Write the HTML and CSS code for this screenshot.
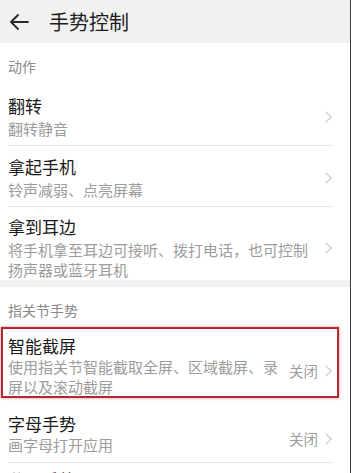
FILE: index.html
```html
<!DOCTYPE html>
<html lang="zh-CN">
<head>
<meta charset="utf-8">
<title>手势控制</title>
<link rel="stylesheet" href="styles.css">
</head>
<body>
<div class="page">
  <header class="topbar">
    <svg class="back" width="20" height="16" viewBox="0 0 20 16" aria-hidden="true">
      <path d="M19 8 H2 M9 1 L2 8 L9 15" fill="none" stroke="#2a2a2a" stroke-width="1.8" stroke-linecap="round" stroke-linejoin="round"/>
    </svg>
    <h1 class="title">手势控制</h1>
  </header>

  <section class="group">
    <div class="label">动作</div>
    <div class="item">
      <div class="text">
        <div class="name">翻转</div>
        <div class="desc">翻转静音</div>
      </div>
      <span class="chev"></span>
    </div>
    <div class="item">
      <div class="text">
        <div class="name">拿起手机</div>
        <div class="desc">铃声减弱、点亮屏幕</div>
      </div>
      <span class="chev"></span>
    </div>
    <div class="item tall last">
      <div class="text">
        <div class="name">拿到耳边</div>
        <div class="desc">将手机拿至耳边可接听、拨打电话，也可控制扬声器或蓝牙耳机</div>
      </div>
      <span class="chev"></span>
    </div>
  </section>

  <section class="group second">
    <div class="label label2">指关节手势</div>
    <div class="item smart">
      <div class="text">
        <div class="name">智能截屏</div>
        <div class="desc">使用指关节智能截取全屏、区域截屏、录屏以及滚动截屏</div>
      </div>
      <span class="state">关闭</span>
      <span class="chev"></span>
    </div>
    <div class="item letter">
      <div class="text">
        <div class="name">字母手势</div>
        <div class="desc">画字母打开应用</div>
      </div>
      <span class="state">关闭</span>
      <span class="chev"></span>
    </div>
    <div class="item peek">
      <div class="text">
        <div class="name">分屏手势</div>
        <div class="desc">指关节横划屏幕开启分屏</div>
      </div>
      <span class="chev"></span>
    </div>
  </section>
</div>
</body>
</html>
```

FILE: styles.css
```css
html, body {
  margin: 0;
  padding: 0;
  background: #ffffff;
}

body {
  font-family: "Noto Sans CJK SC", "Noto Sans", sans-serif;
  overflow: hidden;
}

.page {
  width: 350px;
  height: 473px;
  border-right: 1px solid #3a3a3a;
  overflow: hidden;
  background: #ffffff;
}

.topbar {
  height: 43px;
  background: #f1f1f1;
  display: flex;
  align-items: center;
  padding-left: 9px;
  box-sizing: border-box;
}

.back {
  display: block;
  flex: none;
}

.title {
  margin: 0 0 0 20px;
  font-size: 20px;
  font-weight: 400;
  color: #1e1e1e;
  line-height: 24px;
}

.group {
  padding: 0 16px 0 8px;
}

.group.second {
  border-top: 7px solid #f1f1f1;
}

.label {
  height: 42px;
  box-sizing: border-box;
  padding-top: 5px;
  line-height: 37px;
  font-size: 14px;
  color: #8a8a8a;
}

.label2 {
  height: 40px;
  padding-top: 6px;
  line-height: 34px;
}

.item {
  position: relative;
  display: flex;
  align-items: center;
  padding: 10px 0 6px;
  border-bottom: 1px solid #e8e8e8;
}

.item.tall {
  padding: 9px 0 0;
}

.item.last {
  border-bottom: none;
}

.text {
  flex: 1;
  min-width: 0;
}

.name {
  font-size: 17px;
  line-height: 22px;
  color: #1a1a1a;
}

.desc {
  margin-top: 2px;
  font-size: 15px;
  line-height: 20px;
  color: #9c9c9c;
}

.state {
  flex: none;
  margin: 9px 0 0 10px;
  font-size: 14.5px;
  color: #9c9c9c;
}

.chev {
  flex: none;
  width: 7px;
  height: 7px;
  margin-left: 10px;
  margin-right: 4px;
  border-top: 1px solid #c4c4c4;
  border-right: 1px solid #c4c4c4;
  transform: rotate(45deg);
}

.state + .chev {
  margin-left: 4px;
  margin-top: 9px;
}

.smart {
  padding: 8px 0 0;
  border-bottom: none;
}

.smart .desc {
  margin-top: 0;
}

.smart::after {
  content: "";
  position: absolute;
  left: -7px;
  right: -5px;
  top: 0;
  bottom: -1px;
  border: 2px solid #b8262e;
  box-shadow: 0 0 3px rgba(120, 20, 20, 0.45);
  pointer-events: none;
}

.letter {
  padding: 16px 0 7px;
}

.letter .desc {
  margin-top: 0;
}

.peek {
  padding-top: 6px;
}
```
